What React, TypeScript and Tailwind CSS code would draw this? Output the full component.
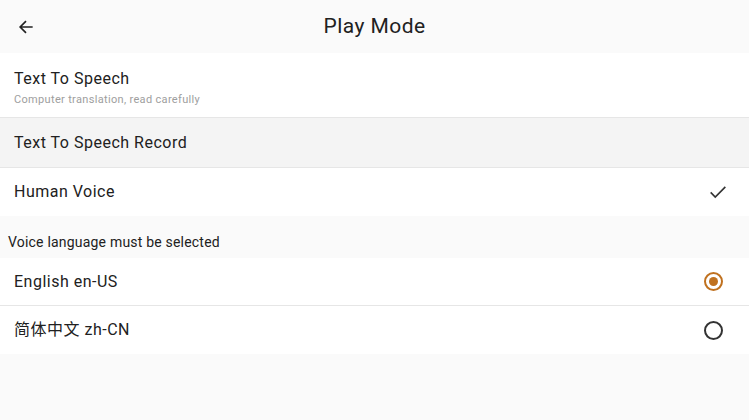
import React from 'react';

const FONT = { fontFamily: 'Roboto, "Noto Sans CJK SC", sans-serif' };

function Check() {
  return (
    <svg width="22" height="22" viewBox="0 0 24 24" fill="none" stroke="#333" strokeWidth="1.8">
      <path d="M4 12.5l5 5L20 6.5" />
    </svg>
  );
}

function Radio({ checked }: { checked: boolean }) {
  return checked ? (
    <div className="w-[19px] h-[19px] rounded-full border-2 border-[#c0711f] flex items-center justify-center">
      <div className="w-[9px] h-[9px] rounded-full bg-[#c0711f]" />
    </div>
  ) : (
    <div className="w-[19px] h-[19px] rounded-full border-2 border-[#333]" />
  );
}

export default function App() {
  return (
    <div className="w-[749px] h-[420px] bg-[#fafafa] text-[#212121]" style={FONT}>
      {/* App bar */}
      <div className="h-[53px] flex items-center relative">
        <div className="pl-[16px]">
          <svg width="20" height="20" viewBox="0 0 24 24" fill="none" stroke="#222" strokeWidth="2">
            <path d="M20 12H5M12 5l-7 7 7 7" />
          </svg>
        </div>
        <div className="absolute inset-0 flex items-center justify-center text-[21px] tracking-[0.45px] pointer-events-none">
          Play Mode
        </div>
      </div>

      {/* Play modes */}
      <div className="h-[65px] bg-white border-b border-[#e6e6e6] px-[14px] pt-[6px] flex flex-col justify-center">
        <div className="text-[16px] leading-[20px] tracking-[0.5px]">Text To Speech</div>
        <div className="text-[11px] leading-[16px] text-[#9e9e9e] mt-[3px] tracking-[0.33px]">Computer translation, read carefully</div>
      </div>
      <div className="h-[50px] bg-[#f4f4f4] border-b border-[#e6e6e6] px-[14px] flex items-center text-[16px] tracking-[0.5px]">
        Text To Speech Record
      </div>
      <div className="h-[48px] bg-white px-[14px] pr-[20px] flex items-center justify-between text-[16px] tracking-[0.5px]">
        <span>Human Voice</span>
        <Check />
      </div>

      {/* Languages */}
      <div className="h-[42px] px-[8px] flex items-end pb-[5px] text-[14px] tracking-[0.2px]">
        Voice language must be selected
      </div>
      <div className="h-[48px] bg-white border-b border-[#e6e6e6] px-[14px] pr-[26px] flex items-center justify-between text-[16px] tracking-[0.5px]">
        <span>English en-US</span>
        <Radio checked />
      </div>
      <div className="h-[48px] bg-white px-[14px] pr-[26px] flex items-center justify-between text-[16px] tracking-[0.5px]">
        <span>简体中文 zh-CN</span>
        <Radio checked={false} />
      </div>
    </div>
  );
}
